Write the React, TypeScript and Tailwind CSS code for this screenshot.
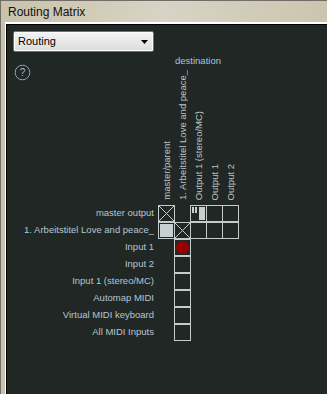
import { Fragment } from "react";

type CellKind = "x" | "fill" | "stereo" | "dot" | "empty" | null;

interface MatrixRow {
  label: string;
  cells: CellKind[];
}

const COLUMNS = ["master/parent", "1. Arbeitstitel Love and peace_", "Output 1 (stereo/MC)", "Output 1", "Output 2"];

const ROWS: MatrixRow[] = [
  { label: "master output", cells: ["x", null, "stereo", "empty", "empty"] },
  { label: "1. Arbeitstitel Love and peace_", cells: ["fill", "x", "empty", "empty", "empty"] },
  { label: "Input 1", cells: [null, "dot", null, null, null] },
  { label: "Input 2", cells: [null, "empty", null, null, null] },
  { label: "Input 1 (stereo/MC)", cells: [null, "empty", null, null, null] },
  { label: "Automap MIDI", cells: [null, "empty", null, null, null] },
  { label: "Virtual MIDI keyboard", cells: [null, "empty", null, null, null] },
  { label: "All MIDI Inputs", cells: [null, "empty", null, null, null] },
];

function Cell({ kind }: { kind: CellKind }) {
  if (!kind) return <div className="w-4 h-4" />;
  return (
    <div className="relative w-[17px] h-[17px] border border-[#c4cccb]">
      {kind === "x" && (
        <svg className="absolute inset-0" width="15" height="15" viewBox="0 0 15 15">
          <path d="M0 0L15 15M15 0L0 15" stroke="#c4cccb" strokeWidth="1" />
        </svg>
      )}
      {kind === "fill" && <div className="absolute inset-[1px] bg-[#c8d0cf]" />}
      {kind === "stereo" && (
        <>
          <div className="absolute left-[1px] top-[1px] w-[2px] h-[6px] bg-[#c8d0cf]" />
          <div className="absolute left-[4px] top-[1px] w-[2px] h-[6px] bg-[#c8d0cf]" />
          <div className="absolute left-[8px] top-[1px] w-[6px] h-[13px] bg-[#c8d0cf]" />
        </>
      )}
      {kind === "dot" && <div className="absolute inset-[1px] rounded-full bg-[#990000]" />}
    </div>
  );
}

function Dropdown() {
  return (
    <div className="ml-[6px] mt-[6px] w-[141px] h-[21px] rounded-[2px] border border-[#707070] bg-gradient-to-b from-[#f4f4f4] to-[#dcdcdc] shadow-[inset_0_0_0_1px_#fcfcfc] flex items-center justify-between pl-[4px] pr-[5px] text-[11px] text-black">
      <span>Routing</span>
      <svg width="7" height="4" viewBox="0 0 7 4">
        <path d="M0 0H7L3.5 4Z" fill="#000" />
      </svg>
    </div>
  );
}

export default function App() {
  return (
    <div className="w-[327px] h-[394px] overflow-hidden flex flex-col border-t border-l border-[#6f6f68] bg-gradient-to-r from-[#c9c2ab] via-[#d8d3c4] to-[#cbc5b0] font-['Liberation_Sans',Arial,sans-serif]">
      <div className="h-[21px] shrink-0 pl-[7px] flex items-center text-[12px] text-[#111]">Routing Matrix</div>
      <div className="flex-1 ml-[4px] border-l border-t-2 border-white">
        <div className="h-full border-l border-t border-black bg-[#212724]">
          <Dropdown />
          <div className="grid grid-cols-[151px_repeat(5,16px)]">
            <div className="h-[153px]">
              <svg className="mt-[12px] ml-[7px]" width="17" height="17" viewBox="0 0 17 17">
                <circle cx="8.5" cy="8.5" r="7.3" fill="none" stroke="#9aa3a3" strokeWidth="1" />
                <text x="8.5" y="12" textAnchor="middle" fontSize="10" fill="#a8bccc" fontFamily="Liberation Sans, Arial, sans-serif">?</text>
              </svg>
            </div>
            <div className="col-span-5 h-[153px] flex flex-col">
              <div className="mt-[3px] leading-[11px] text-[9.5px] text-[#abc4d6] text-center whitespace-nowrap">destination</div>
              <div className="flex-1 flex items-end pb-[5px]">
                {COLUMNS.map((c) => (
                  <div key={c} className="w-4 flex justify-center">
                    <span className="[writing-mode:vertical-rl] rotate-180 whitespace-nowrap text-[9.5px] leading-[11px] text-[#bcc5c5]">
                      {c}
                    </span>
                  </div>
                ))}
              </div>
            </div>
            {ROWS.map((row) => (
              <Fragment key={row.label}>
                <div className="h-4 pr-[4px] text-right whitespace-nowrap text-[9.5px] leading-[16px] text-[#b4c6d3]">
                  {row.label}
                </div>
                {row.cells.map((k, i) => (
                  <Cell key={i} kind={k} />
                ))}
              </Fragment>
            ))}
          </div>
        </div>
      </div>
    </div>
  );
}
